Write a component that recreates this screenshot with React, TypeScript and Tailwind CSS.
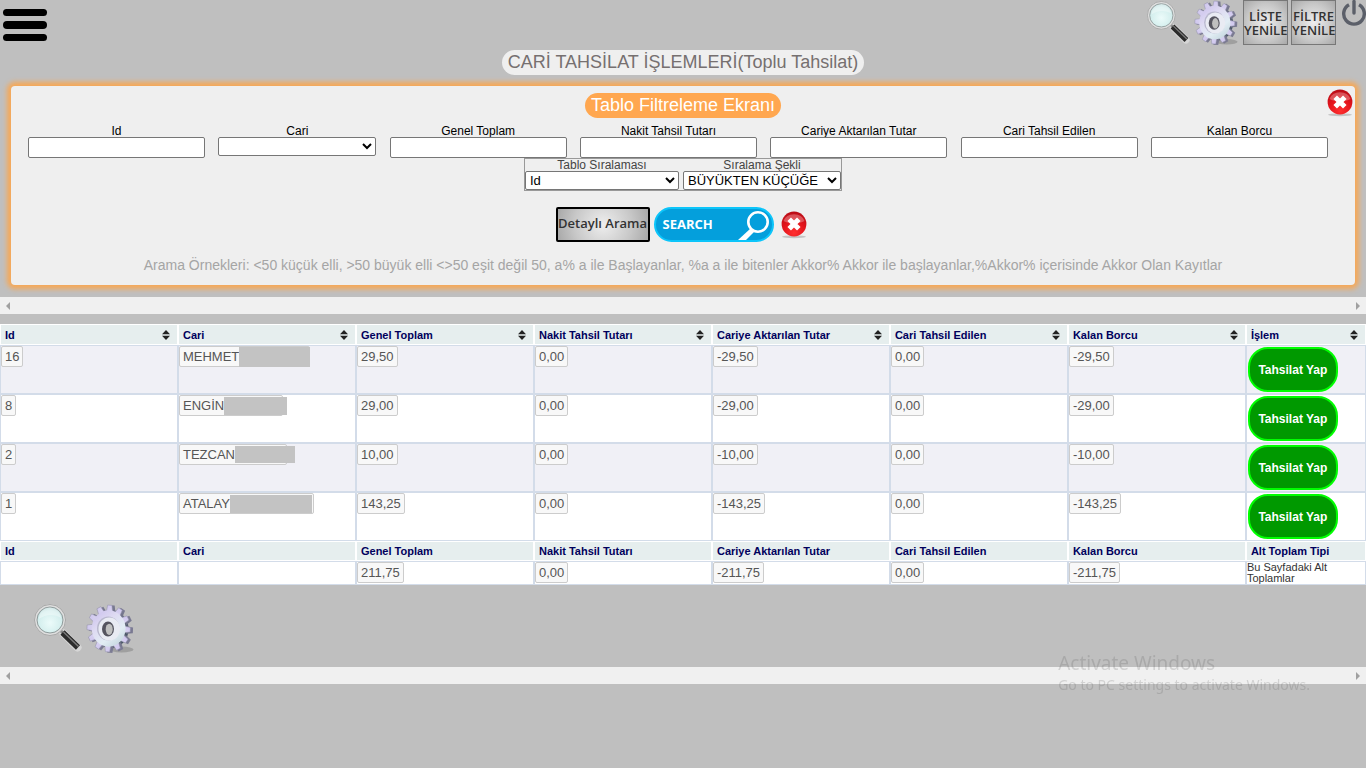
import React from 'react';

const COLUMNS = [
  'Id',
  'Cari',
  'Genel Toplam',
  'Nakit Tahsil Tutarı',
  'Cariye Aktarılan Tutar',
  'Cari Tahsil Edilen',
  'Kalan Borcu',
];

type Row = { id: string; name: string; mask: string; values: string[] };

const ROWS: Row[] = [
  { id: '16', name: 'MEHMET', mask: 'w-[71px] h-5 -mr-1', values: ['29,50', '0,00', '-29,50', '0,00', '-29,50'] },
  { id: '8', name: 'ENGİN', mask: 'w-[63px] h-[18px] -mr-2', values: ['29,00', '0,00', '-29,00', '0,00', '-29,00'] },
  { id: '2', name: 'TEZCAN', mask: 'w-[60px] h-[17px] -mr-3', values: ['10,00', '0,00', '-10,00', '0,00', '-10,00'] },
  { id: '1', name: 'ATALAY', mask: 'w-[82px] h-[18px] -mr-[2px]', values: ['143,25', '0,00', '-143,25', '0,00', '-143,25'] },
];

const TOTALS = ['211,75', '0,00', '-211,75', '0,00', '-211,75'];

function Magnifier({ className }: { className: string }) {
  return (
    <svg viewBox="0 0 48 48" className={className} aria-hidden="true">
      <defs>
        <radialGradient id="lens" cx="50%" cy="60%" r="60%">
          <stop offset="0" stopColor="#ecfbfa" />
          <stop offset="0.7" stopColor="#d3eeed" />
          <stop offset="1" stopColor="#b4d3d4" />
        </radialGradient>
      </defs>
      <path d="M29.500 29.500 43.500 43.500" stroke="#d6d6d6" strokeWidth="8" strokeLinecap="round" />
      <path d="M25 25 29 29" stroke="#888" strokeWidth="3" />
      <path d="M28.500 28.500 44 43.500" stroke="#2b2b2b" strokeWidth="6" strokeLinecap="butt" />
      <path d="M29.500 28 44.500 42.500" stroke="#7c7c7c" strokeWidth="1.400" />
      <circle cx="16" cy="16" r="14.200" fill="url(#lens)" stroke="#dedede" strokeWidth="3" />
      <circle cx="16" cy="16" r="15.500" fill="none" stroke="#9a9a9a" strokeWidth="0.800" />
      <circle cx="16" cy="16" r="13" fill="none" stroke="#8f9c9c" strokeWidth="1" />
      <path d="M5 15a11 11 0 0 1 22-1c-6-4-15-4-22 1z" fill="#fff" opacity="0.350" />
    </svg>
  );
}

const TEETH = Array.from({ length: 12 }, (_, i) => i * 30 + 3);

function Gear({ className }: { className: string }) {
  return (
    <svg viewBox="0 0 48 50" className={className} aria-hidden="true">
      <defs>
        <linearGradient id="steel" gradientUnits="userSpaceOnUse" x1="8" y1="4" x2="38" y2="46">
          <stop offset="0" stopColor="#c8bdec" />
          <stop offset="0.350" stopColor="#dedaf2" />
          <stop offset="0.650" stopColor="#e2edf4" />
          <stop offset="1" stopColor="#b9cdd6" />
        </linearGradient>
        <linearGradient id="edge" gradientUnits="userSpaceOnUse" x1="8" y1="4" x2="38" y2="46">
          <stop offset="0" stopColor="#85829c" />
          <stop offset="1" stopColor="#3b4b58" />
        </linearGradient>
      </defs>
      <ellipse cx="35" cy="45.500" rx="12" ry="3" fill="#555" opacity="0.300" />
      <g transform="translate(2.6 0.6) scale(0.93 1)" fill="url(#edge)">
        <circle cx="23.500" cy="24.500" r="19" />
        {TEETH.map((a) => (
          <path key={a} d="M19.700 8 20.700 0.800h5.600L27.300 8z" transform={`rotate(${a} 23.5 24.5)`} />
        ))}
      </g>
      <g transform="translate(0.3 0) scale(0.93 1)" fill="url(#steel)" stroke="#8f8ea6" strokeWidth="0.500">
        {TEETH.map((a) => (
          <path key={a} d="M20 9 21.200 1.200h4.600L27 9z" transform={`rotate(${a} 23.5 24.5)`} />
        ))}
        <circle cx="23.500" cy="24.500" r="18.200" stroke="none" />
      </g>
      <ellipse cx="21.800" cy="24.500" rx="11.300" ry="12" fill="#b9b8ce" />
      <ellipse cx="22.800" cy="25" rx="10.800" ry="11.500" fill="#e9ebf3" />
      <ellipse cx="21.500" cy="25" rx="6" ry="7.400" fill="#55545f" />
      <ellipse cx="22.700" cy="25.300" rx="3.500" ry="5.600" fill="#bfbfbf" />
    </svg>
  );
}

function RedCross() {
  return (
    <svg viewBox="0 0 26 28" className="h-7 w-[26px]" aria-hidden="true">
      <defs>
        <radialGradient id="red" cx="50%" cy="85%" r="85%">
          <stop offset="0" stopColor="#ff3030" />
          <stop offset="0.550" stopColor="#e3141c" />
          <stop offset="1" stopColor="#b80c16" />
        </radialGradient>
      </defs>
      <ellipse cx="13" cy="25.800" rx="12" ry="1.400" fill="#000" opacity="0.180" />
      <circle cx="13" cy="13" r="12.400" fill="url(#red)" />
      <path d="M2.500 10a11 9.500 0 0 1 21 0c-5 3-16 3-21 0z" fill="#fff" opacity="0.280" />
      <path d="M8.200 8.200 17.800 17.800M17.800 8.200 8.200 17.800" stroke="#fff" strokeWidth="5" />
    </svg>
  );
}

function SortArrows() {
  return (
    <svg viewBox="0 0 8 10" className="h-[10px] w-2" aria-hidden="true">
      <path d="M4 0 8 4.300H0zM4 10 0 5.700h8z" fill="#222" />
    </svg>
  );
}

function ScrollStrip() {
  return (
    <div className="flex h-[17px] items-center justify-between bg-[#f0f0f0] px-[6px]">
      <svg viewBox="0 0 4 8" className="h-2 w-1" aria-hidden="true">
        <path d="M4 0v8L0 4z" fill="#a0a0a0" />
      </svg>
      <svg viewBox="0 0 4 8" className="h-2 w-1" aria-hidden="true">
        <path d="M0 0v8l4-4z" fill="#a0a0a0" />
      </svg>
    </div>
  );
}

function Tag({ children }: { children: React.ReactNode }) {
  return (
    <span className="flex h-[21px] w-fit items-center rounded-[2px] border border-[#ccc] bg-[#f8f8f8] px-[3px] text-[13px] leading-4 text-[#555]">
      {children}
    </span>
  );
}

const CELL = 'border border-[#d3dce9] p-0 align-top';
const HEAD = 'border border-white bg-[#e6eeee] px-1 text-left text-[11px] leading-3 font-bold text-[#00005c]';
const METAL =
  'bg-[radial-gradient(circle,#eeeeee_0%,#c8c8c8_60%,#a8a8a8_100%)] font-["Open_Sans",sans-serif] font-semibold text-[#333]';

export default function App() {
  return (
    <div className='min-h-screen bg-[#bfbfbf] font-["Liberation_Sans",Arial,sans-serif] text-black'>
      <header className="flex h-[50px] items-start justify-between">
        <button aria-label="Menü" className="mt-[9px] ml-[3px] flex w-11 flex-col gap-[5px]">
          <span className="h-[7px] w-full rounded-full bg-black" />
          <span className="h-2 w-full rounded-full bg-black" />
          <span className="h-[7px] w-full rounded-full bg-black" />
        </button>
        <nav className="flex items-start gap-[3px]">
          <button aria-label="Ara" className="pt-[1px]">
            <Magnifier className="h-[43px] w-[43px]" />
          </button>
          <button aria-label="Ayarlar">
            <Gear className="h-[46px] w-[47px]" />
          </button>
          <button className={`${METAL} h-[45px] w-[45px] border border-[#777] text-[13px] leading-[14px]`}>
            LİSTE YENİLE
          </button>
          <button className={`${METAL} h-[45px] w-[45px] border border-[#777] text-[13px] leading-[14px]`}>
            FİLTRE YENİLE
          </button>
          <button aria-label="Çıkış" className="pl-[2px]">
            <svg viewBox="0 0 25 28" className="h-7 w-[25px]" fill="none" stroke="#5b5f69" strokeWidth="3.400" aria-hidden="true">
              <path d="M8 4.800A10.300 10.300 0 1 0 18 4.800" />
              <path d="M13 1.500v11.500" strokeLinecap="round" />
            </svg>
          </button>
        </nav>
      </header>

      <main>
        <h1 className="mx-auto w-fit rounded-full bg-[#efefef] px-[6px] text-[18px] leading-[25px] text-[#767070]">
          CARİ TAHSİLAT İŞLEMLERİ(Toplu Tahsilat)
        </h1>

        <section className="relative mx-[11px] mt-[11px] rounded-[4px] bg-[#efefef] pt-[7px] pb-3 shadow-[0_0_5px_4px_#f7a856]">
          <button aria-label="Kapat" className="absolute top-[3px] right-[2px]">
            <RedCross />
          </button>
          <h2 className="mx-auto w-fit rounded-full bg-[#ffa750] px-[6px] text-[18px] leading-[25px] text-white">
            Tablo Filtreleme Ekranı
          </h2>
          <div className="mt-[7px] mr-[27px] ml-[17px] flex items-start justify-between">
            {COLUMNS.map((c) => (
              <label key={c} className="flex flex-col text-center text-[12px] leading-3">
                {c}
                {c === 'Cari' ? (
                  <select className="h-[19px] w-[158px] rounded-[2px] border border-[#767676] bg-white" />
                ) : (
                  <input type="text" className="h-[21px] w-[177px] rounded-[2px] border border-[#767676] bg-white px-1" />
                )}
              </label>
            ))}
          </div>
          <div className="mx-auto flex w-fit gap-1 border border-[#999] text-center text-[12px] leading-3 text-[#444]">
            <label className="flex flex-col">
              Tablo Sıralaması
              <select className="h-[19px] w-[154px] rounded-[2px] border border-[#767676] bg-white text-[13px] text-black">
                <option>Id</option>
              </select>
            </label>
            <label className="flex flex-col">
              Sıralama Şekli
              <select className="h-[19px] w-[158px] rounded-[2px] border border-[#767676] bg-white text-[13px] text-black">
                <option>BÜYÜKTEN KÜÇÜĞE</option>
              </select>
            </label>
          </div>
          <div className="mt-4 flex items-center justify-center gap-1 pr-1">
            <button className={`${METAL} h-[35px] w-[94px] rounded-[2px] border-2 border-black pb-1 text-[13px] leading-4 whitespace-nowrap`}>
              <span className="-mx-2">Detaylı Arama</span>
            </button>
            <button className='flex h-[35px] w-[120px] items-center justify-between rounded-full border-2 border-[#0cc5fa] bg-[#049fdc] pl-[7px] font-["Open_Sans",sans-serif] text-[13px] font-bold text-white'>
              SEARCH
              <svg viewBox="0 0 34 31" className="h-[31px] w-[34px]" aria-hidden="true">
                <path d="M12.500 19.500 0 31h8l8.500-8.500z" fill="#fff" />
                <circle cx="20" cy="13" r="9.700" fill="#049fdc" stroke="#fff" strokeWidth="2.600" />
              </svg>
            </button>
            <button aria-label="Temizle" className="ml-[3px]">
              <RedCross />
            </button>
          </div>
          <p className="mt-[15px] text-center text-[14px] leading-4 text-[#a5a5a5]">
            Arama Örnekleri: &lt;50 küçük elli, &gt;50 büyük elli &lt;&gt;50 eşit değil 50, a% a ile Başlayanlar, %a a ile
            bitenler Akkor% Akkor ile başlayanlar,%Akkor% içerisinde Akkor Olan Kayıtlar
          </p>
        </section>

        <div className="mt-3">
          <ScrollStrip />
        </div>

        <table className="mt-[10px] w-full table-fixed border-separate border-spacing-0 bg-white">
          <colgroup>
            {COLUMNS.map((c) => (
              <col key={c} className="w-[13.03%]" />
            ))}
            <col />
          </colgroup>
          <thead>
            <tr className="h-[21px]">
              {[...COLUMNS, 'İşlem'].map((c) => (
                <th key={c} className={HEAD}>
                  <div className="flex items-center justify-between pr-[3px]">
                    {c}
                    <SortArrows />
                  </div>
                </th>
              ))}
            </tr>
          </thead>
          <tbody>
            {ROWS.map((r) => (
              <tr key={r.id} className="h-[49px] odd:bg-[#f0f0f6]">
                <td className={CELL}>
                  <Tag>{r.id}</Tag>
                </td>
                <td className={CELL}>
                  <Tag>
                    {r.name}
                    <span className={`${r.mask} shrink-0 bg-[#c3c3c3]`} />
                  </Tag>
                </td>
                {r.values.map((v, i) => (
                  <td key={i} className={CELL}>
                    <Tag>{v}</Tag>
                  </td>
                ))}
                <td className={CELL}>
                  <button className="mt-px ml-px block h-[45px] w-[90px] rounded-[20px] border-2 border-[#0f0] bg-[#090] text-[12px] leading-4 font-bold text-white">
                    Tahsilat Yap
                  </button>
                </td>
              </tr>
            ))}
          </tbody>
          <tfoot>
            <tr className="h-5">
              {[...COLUMNS, 'Alt Toplam Tipi'].map((c) => (
                <th key={c} className={HEAD}>
                  {c}
                </th>
              ))}
            </tr>
            <tr className="h-6">
              <td className={CELL} />
              <td className={CELL} />
              {TOTALS.map((v, i) => (
                <td key={i} className={CELL}>
                  <Tag>{v}</Tag>
                </td>
              ))}
              <td className={`${CELL} pr-6 text-[11px] leading-[11px] text-[#333]`}>Bu Sayfadaki Alt Toplamlar</td>
            </tr>
          </tfoot>
        </table>

        <div className="flex items-start gap-1 px-[34px] pt-[19px] pb-[13px]">
          <button aria-label="Ara">
            <Magnifier className="h-12 w-12" />
          </button>
          <button aria-label="Ayarlar">
            <Gear className="h-[50px] w-[49px]" />
          </button>
        </div>
        <ScrollStrip />
      </main>

      <aside className='pointer-events-none fixed right-[56px] bottom-[73px] font-["Noto_Sans",sans-serif] text-[#555] opacity-20'>
        <p className="text-[19px] leading-6">Activate Windows</p>
        <p className="text-[14px] leading-5">Go to PC settings to activate Windows.</p>
      </aside>
    </div>
  );
}
